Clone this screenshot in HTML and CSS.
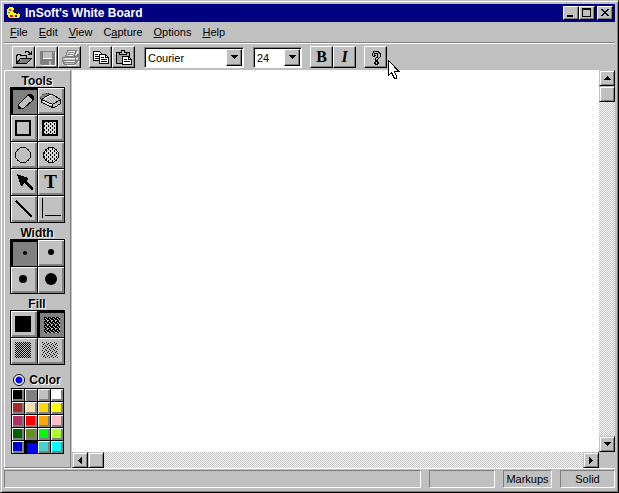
FILE: index.html
```html
<!DOCTYPE html>
<html lang="en">
<head>
<meta charset="utf-8">
<title>InSoft's White Board</title>
<link rel="stylesheet" href="styles.css">
</head>
<body>
<div class="window">
  <header class="titlebar">
    <svg class="app-icon" width="14" height="14" viewBox="0 0 14 14" shape-rendering="crispEdges" aria-hidden="true">
      <path fill="#ff0" d="M2 1h4v1h1v3h1v2h4v1h1v3h-1v1h-2v1H4v-1H2v-1H1V9H0V3h1V2h1z"/>
      <path fill="#f0f" d="M2 3h2v2H2z"/><path fill="#0c0" d="M1 6h2v1H1z"/><path fill="red" d="M3 9h3v2H3z"/><path fill="#00f" d="M8 9h2v2H8z"/>
      <path fill="#000" d="M12 0h1v2h-1v2h-1v1h-1v2h1v1H9V7H7V6H6V4h2v1h2V3h1V2h1zM8 2h1v2H8zM2 12h8v1H2z"/>
    </svg>
    <h1>InSoft's White Board</h1>
    <div class="window-controls">
      <button type="button" aria-label="Minimize"><svg width="14" height="12" viewBox="0 0 14 12" shape-rendering="crispEdges"><path d="M3 8h6v2H3z"/></svg></button>
      <button type="button" aria-label="Maximize"><svg width="14" height="12" viewBox="0 0 14 12" shape-rendering="crispEdges"><path fill-rule="evenodd" d="M2 1h9v9H2zM3 3v6h7V3z"/></svg></button>
      <button type="button" class="close" aria-label="Close"><svg width="14" height="12" viewBox="0 0 14 12" shape-rendering="crispEdges"><path d="M3 2h2v1h1v1h2V3h1V2h2v1h-1v1H9v1H8v1h1v1h1v1h1v1H9V8H8V7H6v1H5v1H3V8h1V7h1V6h1V5H5V4H4V3H3z"/></svg></button>
    </div>
  </header>

  <nav class="menubar" aria-label="Main menu">
    <button type="button"><u>F</u>ile</button>
    <button type="button"><u>E</u>dit</button>
    <button type="button"><u>V</u>iew</button>
    <button type="button">C<u>a</u>pture</button>
    <button type="button"><u>O</u>ptions</button>
    <button type="button"><u>H</u>elp</button>
  </nav>

  <div class="toolbar">
    <div class="group">
      <button type="button" aria-label="Open"><svg width="20" height="19" viewBox="0 0 20 19" shape-rendering="crispEdges">
        <path fill="#c0c0c0" d="M3 8h12v2H8l-5 6z"/>
        <path fill="#808080" d="M7 11h10l-4 5H3z"/>
        <path fill="none" stroke="#000" d="M2.500 16v-9h1v-1h3v1h6v3M2.500 15.500l4-5h11l-5 5zM10.500 4.500h1v-1h3v1h1v1h1v1M14 6.500h3M17.500 3v4"/>
      </svg></button>
      <button type="button" aria-label="Save" disabled><svg width="20" height="19" viewBox="0 0 20 19" shape-rendering="crispEdges">
        <path fill="#fff" d="M4 4h15v14H5v-1H4z"/>
        <path fill="#808080" d="M3 3h15v14H4v-1H3z"/>
        <path fill="#c0c0c0" d="M6 4h9v6H6zM16 4h1v1h-1z"/><path fill="#fff" d="M6 10h9v1H6z"/><path fill="#c0c0c0" d="M12 13h2v4h-2z"/>
      </svg></button>
      <button type="button" aria-label="Print" disabled><svg width="20" height="19" viewBox="0 0 20 19" shape-rendering="crispEdges">
        <path fill="none" stroke="#fff" d="M8.500 3.500h9l-2 6M4.500 10.500h13M5.500 13.500h11M6.500 17.500h9M18.500 8v7M10 5.500h5M9 7.500h5"/>
        <path fill="none" stroke="#808080" d="M7.500 2.500h9l-3 6M7.500 2.500l-2 6M9 4.500h5M8 6.500h5M2.500 9.500h13v3h-13zM2.500 12.500l2 4h10l2-4M3 14.500h12M16 9.500l2-2v5l-2 2M5 8.500h11l2-2"/>
      </svg></button>
    </div>
    <div class="group">
      <button type="button" aria-label="Copy"><svg width="20" height="19" viewBox="0 0 20 19" shape-rendering="crispEdges">
        <path fill="#fff" stroke="#000" d="M2.500 3.500h6l2 2v7h-8z"/><path stroke="#000" d="M4 6.500h3M4 8.500h5M4 10.500h5"/>
        <path fill="#fff" stroke="#000" d="M8.500 6.500h6l3 3v6h-9z"/><path fill="none" stroke="#000" d="M14.500 7v2.500h3M10 9.500h3M10 11.500h6M10 13.500h6"/>
      </svg></button>
      <button type="button" aria-label="Paste"><svg width="20" height="19" viewBox="0 0 20 19" shape-rendering="crispEdges">
        <path fill="#a0a0a0" stroke="#000" d="M2.500 4.500h13v11h-13z"/><path fill="#c0c0c0" stroke="#000" d="M5.500 6.500v-2h2v-2h3v2h2v2z"/>
        <path fill="#fff" stroke="#000" d="M8.500 8.500h6l3 3v5h-9z"/><path fill="none" stroke="#000" d="M14.500 9v2.500h3M10 11.500h3M10 13.500h6"/>
      </svg></button>
    </div>
    <div class="combo font-name">
      <select aria-label="Font"><option>Courier</option></select>
      <span class="drop" aria-hidden="true"><svg width="7" height="4" viewBox="0 0 7 4" shape-rendering="crispEdges"><path d="M0 0h7v1H6v1H5v1H4v1H3V3H2V2H1V1H0z"/></svg></span>
    </div>
    <div class="combo font-size">
      <select aria-label="Font size"><option>24</option></select>
      <span class="drop" aria-hidden="true"><svg width="7" height="4" viewBox="0 0 7 4" shape-rendering="crispEdges"><path d="M0 0h7v1H6v1H5v1H4v1H3V3H2V2H1V1H0z"/></svg></span>
    </div>
    <div class="group">
      <button type="button" class="letter" aria-label="Bold">B</button>
      <button type="button" class="letter italic" aria-label="Italic">I</button>
    </div>
    <div class="group help-group">
      <button type="button" aria-label="Help"><svg width="20" height="19" viewBox="0 0 20 19" shape-rendering="crispEdges">
        <path d="M7 3h6v1h1v1h1v4h-1v1h-1v1h-1v2H9v-3h1V9h1V6H9v1h1v1H9v1H7V8H6V5h1zM9 13h3v1h1v2h-1v1H9v-1H8v-2h1z"/>
        <path fill="#c0c0c0" d="M8 4h4v1H8zM7 5h1v3H7zM12 5h1v1h1v3h-1v1h-1zM11 10h1v1h-1v1h-1v-2h1zM10 14h1v2h-1z"/>
      </svg></button>
      <svg class="pointer" width="12" height="20" viewBox="0 0 12 20" shape-rendering="crispEdges" aria-hidden="true">
        <path fill="#fff" stroke="#000" d="M.5.500v15l3-3 3 6h2v-2l-2-5h4.500z"/>
      </svg>
    </div>
  </div>

  <div class="workspace">
    <aside class="palette">
      <h2>Tools</h2>
      <div class="cells">
        <button type="button" class="pressed" aria-label="Pencil"><svg viewBox="0 0 26 26" shape-rendering="crispEdges">
          <path fill="#c0c0c0" stroke="#000" d="M7.500 20.500v-4l10-10h2l3 3v2l-10 9z"/>
          <path d="M17 6h3l3 3v3h-2l-5-5zM7 18h2v1h1v2H7z"/>
        </svg></button>
        <button type="button" aria-label="Eraser"><svg viewBox="0 0 26 26" shape-rendering="crispEdges">
          <path fill="#808080" d="M4 6h2V5h6v2L4 11H2V8h2z"/>
          <path fill="none" stroke="#000" stroke-dasharray="1 1" d="M2.500 10.500v-2l2-2 3-1h4"/>
          <path fill="#c0c0c0" stroke="#000" d="M3.500 11.500l8-5h3l8 5v4l-6 4h-2l-11-5z"/>
          <path fill="none" stroke="#000" d="M3.500 11.500l11 5 8-5M14.500 16.500v3"/>
          <path fill="none" stroke="#fff" d="M5 11.500l7-4h2M4.500 13l9 4"/>
        </svg></button>
        <button type="button" aria-label="Rectangle"><svg viewBox="0 0 26 26" shape-rendering="crispEdges"><path fill="none" stroke="#000" stroke-width="2" d="M5 6h14v14H5z"/></svg></button>
        <button type="button" aria-label="Filled rectangle"><svg viewBox="0 0 26 26" shape-rendering="crispEdges">
          <defs><pattern id="dots" width="4" height="4" patternUnits="userSpaceOnUse"><path fill="#d8d8d8" d="M0 0h4v4H0z"/><path d="M0 0h1v2H0zM2 2h1v2H2z"/></pattern></defs>
          <path fill="url(#dots)" stroke="#000" stroke-width="2" d="M5 6h14v14H5z"/></svg></button>
        <button type="button" aria-label="Ellipse"><svg viewBox="0 0 26 26" shape-rendering="crispEdges"><circle cx="12" cy="13" r="7.500" fill="none" stroke="#000"/></svg></button>
        <button type="button" aria-label="Filled ellipse"><svg viewBox="0 0 26 26" shape-rendering="crispEdges"><circle cx="13" cy="13" r="7.500" fill="url(#dots)" stroke="#000"/></svg></button>
        <button type="button" aria-label="Arrow"><svg viewBox="0 0 26 26" shape-rendering="crispEdges"><path d="M6 5l11 4v2l-2 1 7 7v2h-2l-7-7-1 3h-2z"/></svg></button>
        <button type="button" class="text-tool" aria-label="Text">T</button>
        <button type="button" aria-label="Line"><svg viewBox="0 0 26 26" shape-rendering="crispEdges"><path stroke="#000" stroke-width="1.500" d="M5 5l16 16"/></svg></button>
        <button type="button" aria-label="Corner line"><svg viewBox="0 0 26 26" shape-rendering="crispEdges"><path stroke="#000" d="M4.500 2v20M7 19.500h16"/></svg></button>
      </div>

      <h2>Width</h2>
      <div class="cells">
        <button type="button" class="pressed" aria-label="Width 1"><svg viewBox="0 0 26 26"><circle cx="14" cy="13" r="2"/></svg></button>
        <button type="button" aria-label="Width 2"><svg viewBox="0 0 26 26"><circle cx="13" cy="12" r="3"/></svg></button>
        <button type="button" aria-label="Width 3"><svg viewBox="0 0 26 26"><circle cx="12" cy="12" r="4"/></svg></button>
        <button type="button" aria-label="Width 4"><svg viewBox="0 0 26 26"><circle cx="13" cy="12" r="6"/></svg></button>
      </div>

      <h2>Fill</h2>
      <div class="cells">
        <button type="button" aria-label="Solid fill"><svg viewBox="0 0 26 26"><path d="M4 5h16v16H4z"/></svg></button>
        <button type="button" class="pressed" aria-label="Dense fill"><svg viewBox="0 0 26 26" shape-rendering="crispEdges">
          <defs><pattern id="dense" width="4" height="4" patternUnits="userSpaceOnUse"><path d="M0 0h4v4H0z"/><path fill="#c0c0c0" d="M0 0h1v1H0zM2 1h1v1H2zM1 2h1v1H1zM3 3h1v1H3zM1 1h1v1H1z"/></pattern></defs>
          <path fill="url(#dense)" d="M6 6h16v16H6z"/></svg></button>
        <button type="button" aria-label="Medium fill"><svg viewBox="0 0 26 26" shape-rendering="crispEdges">
          <defs><pattern id="medium" width="2" height="2" patternUnits="userSpaceOnUse"><path d="M0 0h1v1H0zM1 1h1v1H1z"/></pattern></defs>
          <path fill="url(#medium)" d="M4 4h16v16H4z"/></svg></button>
        <button type="button" aria-label="Light fill"><svg viewBox="0 0 26 26" shape-rendering="crispEdges">
          <defs><pattern id="light" width="4" height="4" patternUnits="userSpaceOnUse"><path d="M0 0h1v1H0zM2 1h1v1H2zM1 2h1v1H1zM3 3h1v1H3z"/></pattern></defs>
          <path fill="url(#light)" d="M4 4h16v16H4z"/></svg></button>
      </div>

      <label class="color-mode"><input type="radio" name="mode" checked>Color</label>
      <div class="swatches">
        <button type="button" class="c-black" aria-label="Black"></button><button type="button" class="c-gray" aria-label="Gray"></button><button type="button" class="c-silver" aria-label="Silver"></button><button type="button" class="c-white" aria-label="White"></button>
        <button type="button" class="c-brown" aria-label="Brown"></button><button type="button" class="c-wheat" aria-label="Wheat"></button><button type="button" class="c-gold" aria-label="Gold"></button><button type="button" class="c-yellow" aria-label="Yellow"></button>
        <button type="button" class="c-maroon" aria-label="Maroon"></button><button type="button" class="c-red" aria-label="Red"></button><button type="button" class="c-orange" aria-label="Orange"></button><button type="button" class="c-pink" aria-label="Pink"></button>
        <button type="button" class="c-green" aria-label="Dark green"></button><button type="button" class="c-olive" aria-label="Olive"></button><button type="button" class="c-lime" aria-label="Lime"></button><button type="button" class="c-yellowgreen" aria-label="Yellow green"></button>
        <button type="button" class="c-navy" aria-label="Medium blue"></button><button type="button" class="c-blue selected" aria-label="Blue"></button><button type="button" class="c-turquoise" aria-label="Turquoise"></button><button type="button" class="c-cyan" aria-label="Cyan"></button>
      </div>
    </aside>

    <main class="board" aria-label="Drawing area"></main>

    <div class="scroll vertical">
      <button type="button" aria-label="Scroll up"><svg width="7" height="4" viewBox="0 0 7 4" shape-rendering="crispEdges"><path d="M3 0h1v1h1v1h1v1h1v1H0V3h1V2h1V1h1z"/></svg></button>
      <span class="thumb"></span>
      <button type="button" class="end" aria-label="Scroll down"><svg width="7" height="4" viewBox="0 0 7 4" shape-rendering="crispEdges"><path d="M0 0h7v1H6v1H5v1H4v1H3V3H2V2H1V1H0z"/></svg></button>
    </div>
    <div class="scroll horizontal">
      <button type="button" aria-label="Scroll left"><svg width="4" height="7" viewBox="0 0 4 7" shape-rendering="crispEdges"><path d="M3 0h1v7H3V6H2V5H1V4H0V3h1V2h1V1h1z"/></svg></button>
      <span class="thumb"></span>
      <button type="button" class="end" aria-label="Scroll right"><svg width="4" height="7" viewBox="0 0 4 7" shape-rendering="crispEdges"><path d="M0 0h1v1h1v1h1v1h1v1H3v1H2v1H1v1H0z"/></svg></button>
    </div>
  </div>

  <footer class="statusbar">
    <span></span><span></span><span>Markups</span><span>Solid</span>
  </footer>
</div>
</body>
</html>
```
FILE: styles.css
```css
* { box-sizing: border-box; }

body {
  margin: 0;
  background: #c0c0c0;
  color: #000;
  font: 11px/16px "Liberation Sans", sans-serif;
}

button {
  margin: 0;
  padding: 0;
  border: 0;
  background: #c0c0c0;
  color: #000;
  font: inherit;
}

svg { display: block; }

.window {
  display: flex;
  flex-direction: column;
  min-height: 100vh;
  padding: 3px 3px 4px 3px;
  border: 1px solid;
  border-color: #c0c0c0 #000 #000 #c0c0c0;
  box-shadow: inset 1px 1px #fff, inset -1px -1px #808080;
}

.titlebar {
  display: flex;
  align-items: center;
  height: 18px;
  padding: 0 2px 0 3px;
  background: #000080;
  color: #fff;
}

.titlebar h1 {
  flex: 1;
  margin: 0 0 0 4px;
  font: bold 12px/18px "Liberation Sans", sans-serif;
}

.window-controls { display: flex; }

.window-controls button {
  width: 16px;
  height: 14px;
  border: 1px solid;
  border-color: #fff #000 #000 #fff;
  box-shadow: inset -1px -1px #808080;
}

.window-controls .close { margin-left: 2px; }

.menubar {
  display: flex;
  gap: 11px;
  height: 22px;
  padding: 2px 6px 4px;
  border-bottom: 1px solid #fff;
  box-shadow: inset 0 -1px #808080;
}

.toolbar {
  display: flex;
  align-items: center;
  height: 26px;
  padding-left: 8px;
}

.group {
  display: flex;
  margin-right: 8px;
}

.group button {
  display: grid;
  place-items: center;
  width: 23px;
  height: 22px;
  border: 1px solid;
  border-color: #fff #000 #000 #fff;
  box-shadow: inset -1px -1px #808080;
}

.group .letter {
  font: bold 16px/18px "Liberation Serif", serif;
}

.group .italic { font-style: italic; }

.help-group { position: relative; }

.pointer {
  position: absolute;
  left: 24px;
  top: 14px;
  z-index: 1;
}

.combo {
  position: relative;
  display: flex;
  height: 21px;
  margin-left: 1px;
  margin-right: 8px;
  padding: 2px 1px 1px 2px;
  border: 1px solid;
  border-color: #808080 #fff #fff #808080;
  box-shadow: inset 1px 1px #000;
  background: #fff;
}

.font-name { width: 100px; }
.font-size { width: 49px; }

.combo select {
  flex: 1;
  min-width: 0;
  padding: 0 0 0 1px;
  border: 0;
  background: transparent;
  color: #000;
  font: inherit;
  appearance: none;
}

.drop {
  position: absolute;
  right: 1px;
  top: 1px;
  bottom: 1px;
  width: 16px;
  display: grid;
  place-items: center;
  border: 1px solid;
  border-color: #fff #000 #000 #fff;
  box-shadow: inset -1px -1px #808080;
  background: #c0c0c0;
  pointer-events: none;
}

.workspace {
  flex: 1;
  display: grid;
  grid-template-columns: 68px 1fr 16px;
  grid-template-rows: 1fr 16px;
}

.palette {
  grid-row: 1 / 3;
  display: flex;
  flex-direction: column;
  align-items: center;
  margin-right: 1px;
  padding-right: 1px;
  border: 1px solid;
  border-color: #fff #808080 #808080 #fff;
}

.palette h2,
.color-mode {
  margin: 0;
  font: bold 12px/16px "Liberation Sans", sans-serif;
  text-shadow: 1px 1px #fff;
}

.palette h2 { height: 16px; padding-top: 2px; }

.cells {
  display: grid;
  grid-template-columns: 26px 26px;
  grid-auto-rows: 26px;
  gap: 1px;
  padding: 1px;
  background: #000;
}

.cells button { box-shadow: inset 1px 1px #fff, inset -2px -2px #808080; }

.cells .pressed {
  background: #808080;
  box-shadow: inset 2px 2px #000;
}

.cells .text-tool { font: bold 19px/26px "Liberation Serif", serif; }

.color-mode {
  display: flex;
  align-items: center;
  gap: 4px;
  margin-top: 7px;
}

.color-mode input {
  appearance: none;
  width: 12px;
  height: 12px;
  margin: 0;
  border: 1px solid #000;
  border-radius: 50%;
  background: radial-gradient(circle, #00f 3px, #fff 4px);
}

.swatches {
  display: grid;
  grid-template-columns: repeat(4, 12px);
  grid-auto-rows: 12px;
  gap: 1px;
  padding: 1px;
  background: #000;
}

.swatches button { box-shadow: inset 1px 1px #fff, inset -2px -2px #808080; }
.swatches .selected { box-shadow: inset 2px 2px #000; }

.c-black { background: #000; }
.c-gray { background: #808080; }
.c-silver { background: #c0c0c0; }
.c-white { background: #fff; }
.c-brown { background: #a52a2a; }
.c-wheat { background: #f5deb3; }
.c-gold { background: #ffd700; }
.c-yellow { background: #ff0; }
.c-maroon { background: #b03060; }
.c-red { background: #f00; }
.c-orange { background: #ffa500; }
.c-pink { background: #ffc0cb; }
.c-green { background: #006400; }
.c-olive { background: #6b8e23; }
.c-lime { background: #0f0; }
.c-yellowgreen { background: #adff2f; }
.c-navy { background: #0000cd; }
.c-blue { background: #00f; }
.c-turquoise { background: #48d1cc; }
.c-cyan { background: #0ff; }

.board { background: #fff; }

.scroll {
  display: flex;
  background: repeating-conic-gradient(#fff 0 25%, #c0c0c0 0 50%) 0 0 / 2px 2px;
}

.vertical { flex-direction: column; }

.scroll button,
.thumb {
  display: grid;
  place-items: center;
  width: 16px;
  height: 16px;
  border: 1px solid;
  border-color: #c0c0c0 #000 #000 #c0c0c0;
  box-shadow: inset 1px 1px #fff, inset -1px -1px #808080;
  background: #c0c0c0;
}

.vertical .end { margin-top: auto; }
.horizontal .end { margin-left: auto; }

.statusbar {
  display: grid;
  grid-template-columns: 1fr 66px 49px 55px;
  gap: 8px;
  padding-top: 1px;
  border-top: 1px solid #fff;
  text-align: center;
}

.statusbar span {
  height: 18px;
  border: 1px solid;
  border-color: #808080 #fff #fff #808080;
  line-height: 17px;
}
```
